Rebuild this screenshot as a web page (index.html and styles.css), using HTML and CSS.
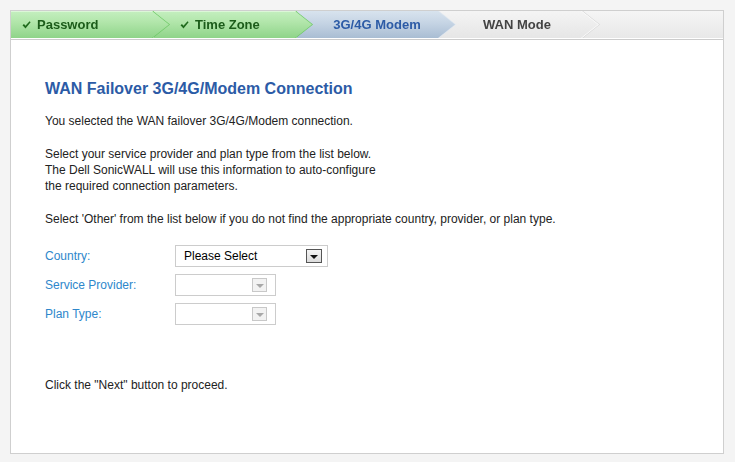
FILE: index.html
```html
<!DOCTYPE html>
<html lang="en">

<head>
    <meta charset="UTF-8">
    <meta name="viewport" content="width=device-width, initial-scale=1.0">
    <title>WAN Failover 3G/4G/Modem Connection</title>
    <link rel="stylesheet" href="styles.css">
</head>

<body>
    <div class="wizard">
        <ol class="steps">
            <li class="step done">
                <span class="step-shape">
                    <svg class="check" width="9" height="8" viewBox="0 0 9 8"><path d="M0.5 4.2 L2 3 L3.4 4.8 L7.6 0.3 L8.6 1.2 L3.5 7.6 Z" fill="#1f6a1c"/></svg>
                    Password
                </span>
            </li>
            <li class="step done">
                <span class="step-shape">
                    <svg class="check" width="9" height="8" viewBox="0 0 9 8"><path d="M0.5 4.2 L2 3 L3.4 4.8 L7.6 0.3 L8.6 1.2 L3.5 7.6 Z" fill="#1f6a1c"/></svg>
                    Time Zone
                </span>
            </li>
            <li class="step current"><span class="step-shape">3G/4G Modem</span></li>
            <li class="step todo"><span class="step-shape">WAN Mode</span></li>
        </ol>

        <div class="content">
            <h1>WAN Failover 3G/4G/Modem Connection</h1>
            <p>You selected the WAN failover 3G/4G/Modem connection.</p>
            <p>Select your service provider and plan type from the list below.<br>
                The Dell SonicWALL will use this information to auto-configure<br>
                the required connection parameters.</p>
            <p>Select 'Other' from the list below if you do not find the appropriate country, provider, or plan type.</p>

            <div class="form">
                <div class="row">
                    <label class="label">Country:</label>
                    <div class="select">
                        <span class="select-value">Please Select</span>
                        <span class="select-btn"></span>
                    </div>
                </div>
                <div class="row">
                    <label class="label">Service Provider:</label>
                    <div class="select disabled">
                        <span class="select-value"></span>
                        <span class="select-btn"></span>
                    </div>
                </div>
                <div class="row">
                    <label class="label">Plan Type:</label>
                    <div class="select disabled">
                        <span class="select-value"></span>
                        <span class="select-btn"></span>
                    </div>
                </div>
            </div>

            <p class="hint">Click the "Next" button to proceed.</p>
        </div>
    </div>
</body>

</html>
```

FILE: styles.css
```css
body {
    margin: 0;
    padding: 10px;
    background-color: #f4f4f4;
    font-family: "Liberation Sans", Arial, sans-serif;
    font-size: 12px;
    color: #222;
}

.wizard {
    width: 712px;
    height: 442px;
    background: #ffffff;
    border: 1px solid #cfcfcf;
}

/* step bar */

.steps {
    display: flex;
    align-items: flex-start;
    height: 28px;
    margin: 0;
    padding: 0;
    list-style: none;
    background: linear-gradient(#f5f5f5, #e7e7e7);
    border-bottom: 1px solid #cccccc;
    box-shadow: inset 0 -1px 0 #ffffff;
}

.step {
    position: relative;
    width: 158px;
    height: 27px;
    margin-left: -15px;
}

.step:first-child {
    margin-left: 0;
    z-index: 4;
}

.step:nth-child(2) {
    z-index: 3;
}

.step:nth-child(3) {
    z-index: 2;
}

.step:nth-child(4) {
    z-index: 1;
}

.step-shape {
    display: flex;
    align-items: center;
    gap: 6px;
    height: 100%;
    padding: 0 17px 0 26px;
    box-sizing: border-box;
    font-size: 13px;
    font-weight: bold;
    clip-path: polygon(0 0, calc(100% - 17px) 0, 100% 50%, calc(100% - 17px) 100%, 0 100%);
}

.step:first-child .step-shape {
    padding-left: 11px;
}

.step.done {
    filter: drop-shadow(1px 0 0 #6cc764);
}

.step.done .step-shape {
    color: #1c5c1a;
    background: linear-gradient(#c4efbf, #b2e6ab 40%, #8fd489);
    box-shadow: inset 0 1px 0 #dcf7d8;
}

.step.current {
    filter: drop-shadow(1px 0 0 #dfe7f0);
}

.step.current .step-shape {
    justify-content: center;
    padding-left: 19px;
    color: #2c5ba6;
    background: linear-gradient(#d8e3ee, #c5d4e4 45%, #a9bdd3);
}

.step.todo {
    filter: drop-shadow(1px 0 0 #ffffff) drop-shadow(1px 0 0 #d6d6d6);
}

.step.todo .step-shape {
    justify-content: center;
    padding-left: 13px;
    color: #444444;
    background: linear-gradient(#f4f4f4, #e6e6e6);
}

.check {
    flex: none;
}

/* page content */

.content {
    padding: 39px 34px 0;
}

h1 {
    margin: 0 0 14px;
    font-size: 16px;
    line-height: 20px;
    color: #2c5ba6;
}

p {
    margin: 0 0 17px;
    line-height: 16px;
}

.form {
    display: flex;
    flex-direction: column;
    gap: 7px;
    margin-top: 18px;
}

.row {
    display: flex;
    align-items: center;
    height: 22px;
}

.label {
    width: 130px;
    color: #2e87cb;
}

.select {
    display: flex;
    align-items: center;
    justify-content: space-between;
    width: 153px;
    height: 22px;
    padding: 0 5px 0 8px;
    box-sizing: border-box;
    border: 1px solid #cccccc;
    background: #ffffff;
}

.select-value {
    color: #000;
}

.select-btn {
    display: flex;
    align-items: center;
    justify-content: center;
    width: 16px;
    height: 14px;
    box-sizing: border-box;
    border: 1px solid #555555;
    background: linear-gradient(#f4f4f4, #dcdcdc);
}

.select-btn::after {
    content: "";
    border-left: 4px solid transparent;
    border-right: 4px solid transparent;
    border-top: 4px solid #111;
    margin-top: 1px;
}

.select.disabled {
    width: 101px;
    padding-right: 8px;
}

.select.disabled .select-btn {
    width: 15px;
    border-color: #c8c8c8;
    background: #f2f2f2;
}

.select.disabled .select-btn::after {
    border-top-color: #a8a8a8;
}

.hint {
    margin-top: 52px;
}
```
